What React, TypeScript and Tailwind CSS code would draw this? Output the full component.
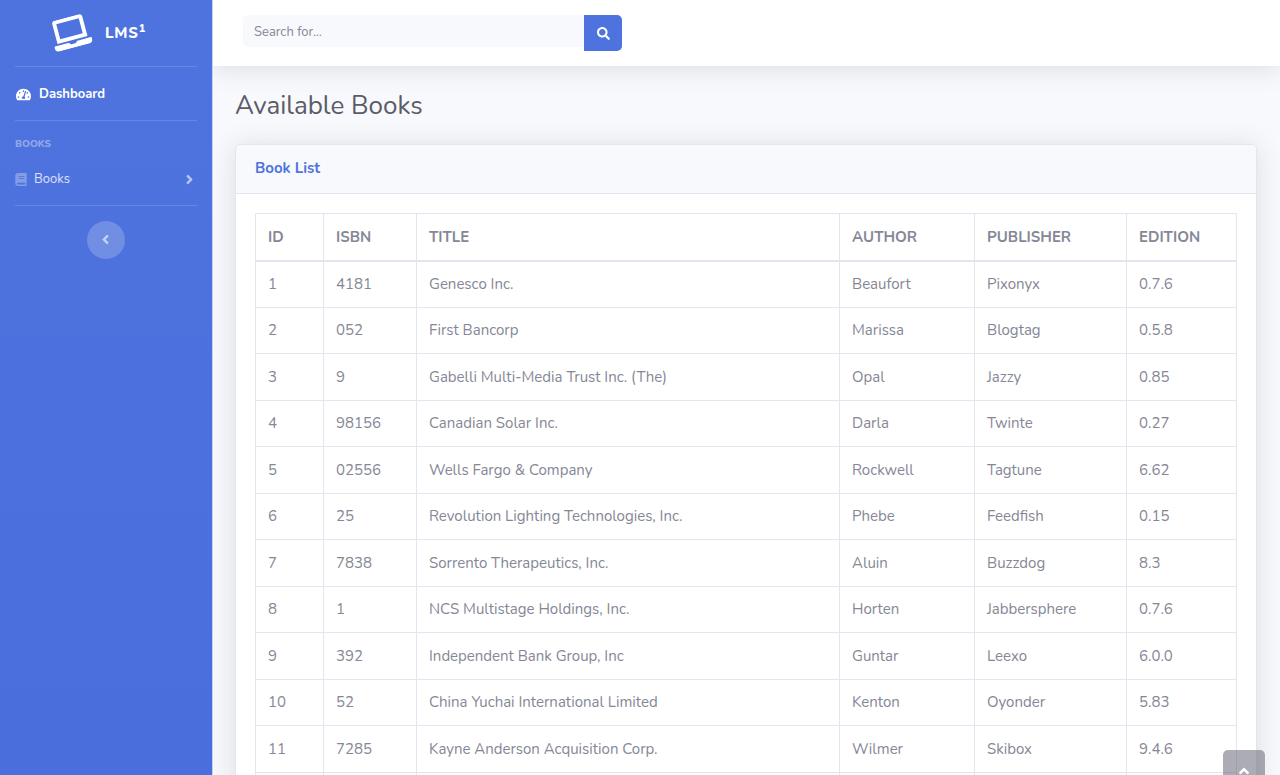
import React from "react";
import {
  FaAngleLeft,
  FaAngleRight,
  FaAngleUp,
  FaBook,
  FaLaptop,
  FaSearch,
  FaTachometerAlt,
} from "react-icons/fa";

type Book = {
  id: number;
  isbn: string;
  title: string;
  author: string;
  publisher: string;
  edition: string;
};

const books: Book[] = [
  { id: 1, isbn: "4181", title: "Genesco Inc.", author: "Beaufort", publisher: "Pixonyx", edition: "0.7.6" },
  { id: 2, isbn: "052", title: "First Bancorp", author: "Marissa", publisher: "Blogtag", edition: "0.5.8" },
  { id: 3, isbn: "9", title: "Gabelli Multi-Media Trust Inc. (The)", author: "Opal", publisher: "Jazzy", edition: "0.85" },
  { id: 4, isbn: "98156", title: "Canadian Solar Inc.", author: "Darla", publisher: "Twinte", edition: "0.27" },
  { id: 5, isbn: "02556", title: "Wells Fargo & Company", author: "Rockwell", publisher: "Tagtune", edition: "6.62" },
  { id: 6, isbn: "25", title: "Revolution Lighting Technologies, Inc.", author: "Phebe", publisher: "Feedfish", edition: "0.15" },
  { id: 7, isbn: "7838", title: "Sorrento Therapeutics, Inc.", author: "Aluin", publisher: "Buzzdog", edition: "8.3" },
  { id: 8, isbn: "1", title: "NCS Multistage Holdings, Inc.", author: "Horten", publisher: "Jabbersphere", edition: "0.7.6" },
  { id: 9, isbn: "392", title: "Independent Bank Group, Inc", author: "Guntar", publisher: "Leexo", edition: "6.0.0" },
  { id: 10, isbn: "52", title: "China Yuchai International Limited", author: "Kenton", publisher: "Oyonder", edition: "5.83" },
  { id: 11, isbn: "7285", title: "Kayne Anderson Acquisition Corp.", author: "Wilmer", publisher: "Skibox", edition: "9.4.6" },
];

const columns = [
  { label: "ID", width: "w-[68px]" },
  { label: "ISBN", width: "w-[93px]" },
  { label: "TITLE", width: "" },
  { label: "AUTHOR", width: "w-[135px]" },
  { label: "PUBLISHER", width: "w-[152px]" },
  { label: "EDITION", width: "w-[110px]" },
];

function Divider() {
  return <hr className="mx-[15px] border-t border-white/15" />;
}

function Sidebar() {
  return (
    <aside className="relative z-10 flex w-[212px] shrink-0 flex-col bg-linear-to-b from-[#4e73df] from-10% to-[#4a6edb] text-white shadow-[1px_0_0_#c5d0f5]">
      <a href="#" className="flex h-[66px] items-center justify-center pb-[2px]">
        <FaLaptop className="h-[31px] w-[39px] -rotate-15" />
        <span className="mx-[15px] pt-[2px] text-[15px] font-extrabold tracking-wider">
          LMS<sup className="text-[11px]">1</sup>
        </span>
      </a>
      <Divider />
      <a href="#" className="flex h-[53px] items-center gap-2 px-4 pt-[2px] text-[13px] font-bold">
        <FaTachometerAlt className="size-[15px]" />
        Dashboard
      </a>
      <Divider />
      <h2 className="px-[15px] pt-4 text-[10px] leading-[14px] font-extrabold text-white/40">BOOKS</h2>
      <a href="#" className="flex h-[54px] items-center px-[15px] pt-[2px] text-[13px] text-white/80">
        <FaBook className="h-[13px] w-3 text-white/30" />
        <span className="ml-[7px]">Books</span>
        <FaAngleRight className="ml-auto size-[15px] text-white/60" />
      </a>
      <Divider />
      <button
        type="button"
        aria-label="Collapse sidebar"
        className="mt-[15px] flex size-[38px] items-center justify-center self-center rounded-full bg-white/20 pr-[2px] pb-[2px] text-white/60"
      >
        <FaAngleLeft className="size-[15px]" />
      </button>
    </aside>
  );
}

function Topbar() {
  return (
    <header className="relative h-[66px] shrink-0 bg-white px-[31px] pt-[15px] shadow-[0_2px_27px_rgba(58,59,69,0.15)]">
      <form role="search" className="flex w-[379px] items-start">
        <input
          type="text"
          aria-label="Search for"
          placeholder="Search for..."
          className="h-8 min-w-0 flex-1 rounded-l-[5px] bg-[#f8f9fc] px-[11px] pt-[2px] text-[13px] text-[#6e707e] outline-none placeholder:text-[#858796]"
        />
        <button
          type="button"
          aria-label="Search"
          className="flex h-9 w-[38px] items-center justify-center rounded-r-[5px] bg-[#4e73df] text-white"
        >
          <FaSearch className="size-[13px]" />
        </button>
      </form>
    </header>
  );
}

function BookTable() {
  return (
    <table className="w-full table-fixed border-collapse border border-[#e3e6f0] text-left">
      <thead>
        <tr className="h-[47px]">
          {columns.map((column) => (
            <th
              key={column.label}
              scope="col"
              className={`border border-b-2 border-[#e3e6f0] px-3 pt-[2px] font-bold ${column.width}`}
            >
              {column.label}
            </th>
          ))}
        </tr>
      </thead>
      <tbody>
        {books.map((book) => (
          <tr key={book.id} className="odd:h-[47px] even:h-[46px]">
            {[book.id, book.isbn, book.title, book.author, book.publisher, book.edition].map((value, i) => (
              <td key={columns[i].label} className="border border-[#e3e6f0] px-3">
                {value}
              </td>
            ))}
          </tr>
        ))}
        <tr className="h-[46px]">
          {columns.map((column) => (
            <td key={column.label} className="border border-[#e3e6f0]" />
          ))}
        </tr>
      </tbody>
    </table>
  );
}

export default function App() {
  return (
    <div className="flex h-screen overflow-hidden bg-[#f8f9fc] font-['Nunito','Lato',sans-serif] text-[15px] leading-[23px] text-[#858796]">
      <Sidebar />
      <div className="flex min-w-0 flex-1 flex-col overflow-hidden">
        <Topbar />
        <main className="px-[23px] pt-6">
          <h1 className="text-[26px] leading-8 text-[#5a5c69]">Available Books</h1>
          <section className="mt-[22px] rounded-[5px] border border-[#e3e6f0] bg-white shadow-[0_2px_27px_rgba(58,59,69,0.15)]">
            <h2 className="rounded-t-[5px] border-b border-[#e3e6f0] bg-[#f8f9fc] px-[19px] pt-3 pb-[13px] font-bold text-[#4e73df]">
              Book List
            </h2>
            <div className="p-[19px]">
              <BookTable />
            </div>
          </section>
        </main>
      </div>
      <a
        href="#"
        aria-label="Scroll to top"
        className="fixed right-[15px] -bottom-[17px] flex size-[42px] items-center justify-center rounded-[5px] bg-[#5a5c69]/50 text-white"
      >
        <FaAngleUp className="size-4" />
      </a>
    </div>
  );
}
